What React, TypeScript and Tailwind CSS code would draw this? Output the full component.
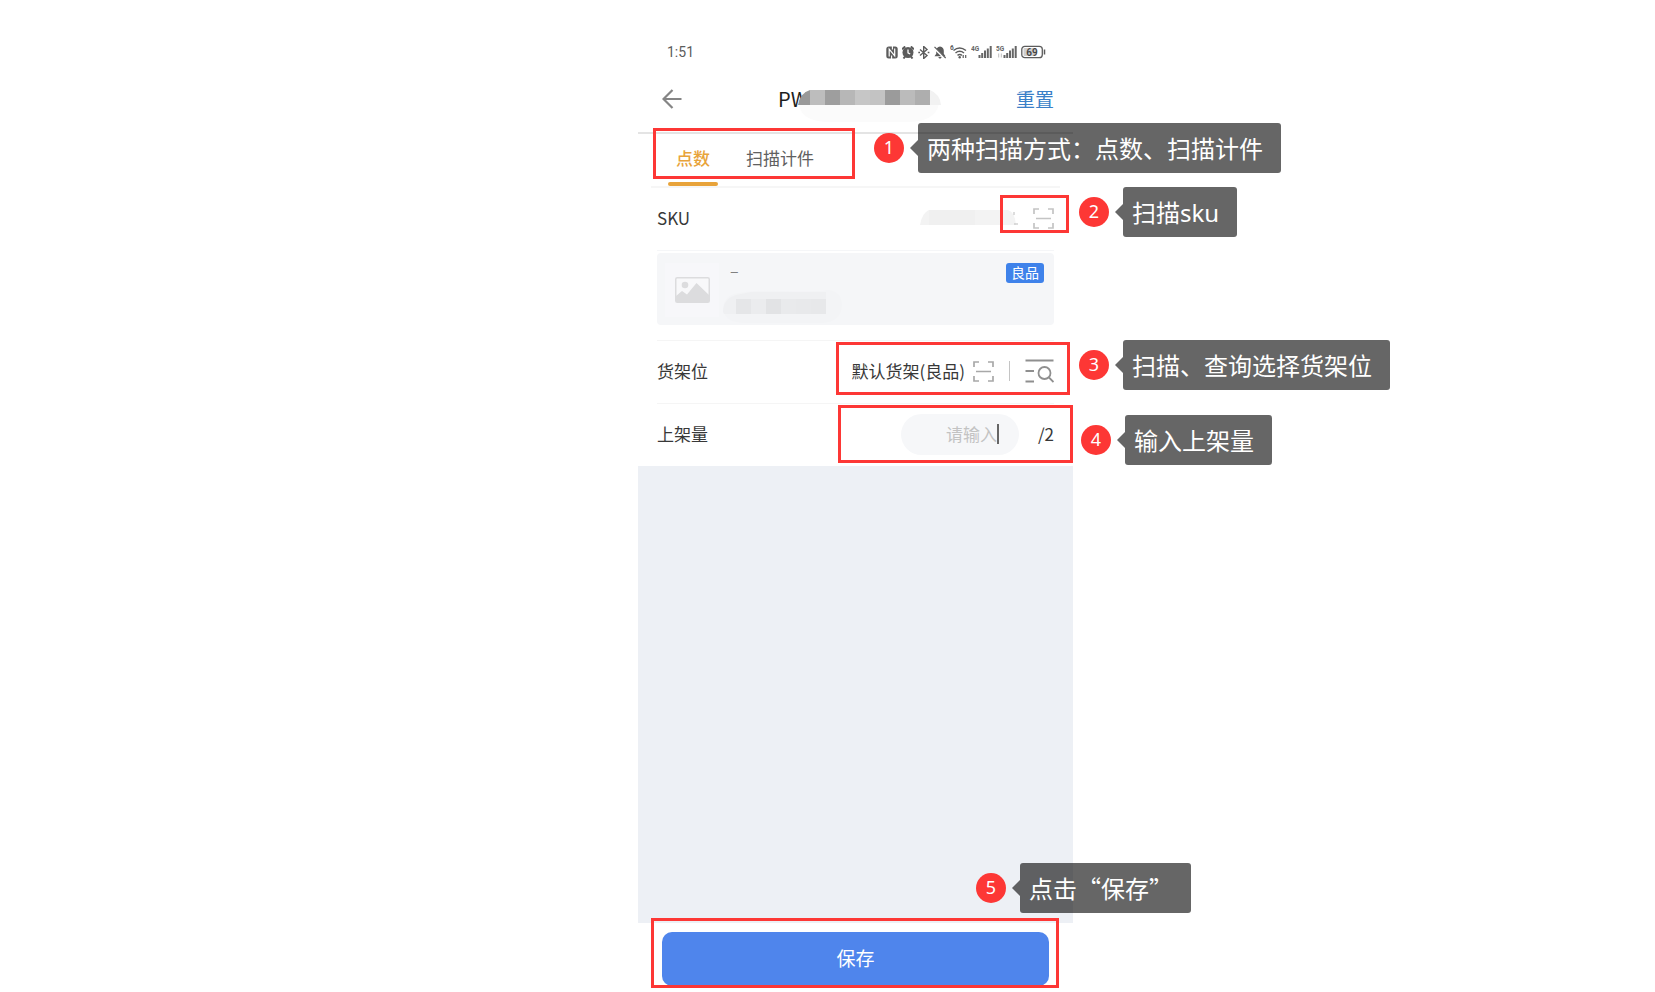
import { useState } from 'react';
import type { ReactNode } from 'react';

const tabs = ['点数', '扫描计件'];

const titleMask = ['#bdbdbd', '#9e9e9e', '#b7b7b7', '#c6c6c6', '#c3c3c3', '#9b9b9b', '#bbbbbb', '#aeaeae'];
const productMask = ['#e5e6e8', '#ebecee', '#e2e3e5', '#e9eaec', '#e8e9eb', '#e7e8ea'];

function Frame({ className }: { className: string }) {
  return <div className={`pointer-events-none absolute z-10 border-3 border-[#fd3735] ${className}`} />;
}

interface CalloutProps {
  step: number;
  className: string;
  children: ReactNode;
}

function Callout({ step, className, children }: CalloutProps) {
  return (
    <div className={`absolute z-20 flex items-center whitespace-nowrap text-white ${className}`}>
      <span className="flex size-[30px] items-center justify-center rounded-full bg-[#fd3735] pb-0.5 font-['Noto_Sans',sans-serif] text-lg leading-6">
        {step}
      </span>
      <span className="ml-1.5 h-4 w-2 bg-black/60 [clip-path:polygon(100%_0,100%_100%,0_50%)]" />
      <span className="h-[50px] rounded-[3px] bg-black/60 pr-[18px] pl-[9px] text-2xl leading-[49px]">{children}</span>
    </div>
  );
}

function ScanIcon({ className }: { className: string }) {
  return (
    <svg viewBox="0 0 21 21" className={`h-[21px] w-[21px] ${className}`} fill="none" stroke="currentColor" strokeWidth="1.7">
      <path d="M1 6V1h5M15 1h5v5M20 15v5h-5M6 20H1v-5M3 10.500h15" />
    </svg>
  );
}

function SignalIcon({ label, weak }: { label: string; weak?: boolean }) {
  return (
    <svg viewBox="0 0 21 14" className="h-3.5 w-[21px]" fill="#666">
      <text x="0" y="5.500" fontSize="6.500" fontWeight="700" fontFamily="Roboto, sans-serif">{label}</text>
      {weak && <path d="M2 8.500h1.200v4H2zM4.800 8.500H6v4H4.800z" opacity=".35" />}
      <rect x="7.500" y="10" width="2" height="3" />
      <rect x="10.200" y="8" width="2" height="5" />
      <rect x="13" y="5.500" width="2" height="7.500" />
      <rect x="15.800" y="3.500" width="2" height="9.500" />
      <rect x="18.700" y="1" width="2" height="12" />
    </svg>
  );
}

function StatusBar() {
  return (
    <div className="flex h-16 items-center justify-between pt-10 pr-[27px] pl-[29px] text-[#5c5c5c]">
      <span className="font-[Roboto,sans-serif] text-sm leading-5">1:51</span>
      <div className="flex items-center gap-1">
        {/* nfc */}
        <svg viewBox="0 0 12 13" className="h-[13px] w-3">
          <rect x=".3" y=".5" width="11.400" height="12" rx="2.500" fill="currentColor" />
          <path d="M3.200 10.500V3.200l5.500 6.600V2.500" fill="none" stroke="#fff" strokeWidth="1.200" />
          <path d="M5.600 9.500v3.500M6.400 0v3.500" stroke="#fff" strokeWidth="1.100" />
        </svg>
        {/* alarm */}
        <svg viewBox="0 0 12 13" className="h-[13px] w-3">
          <path d="M0 3.200L3.200.5M12 3.200L8.800.5M1.500 12.500l1.500-2M10.500 12.500l-1.500-2" stroke="currentColor" strokeWidth="2" />
          <circle cx="6" cy="6.500" r="5.500" fill="currentColor" />
          <path d="M6 3.500v3.300L8.200 8" fill="none" stroke="#fff" strokeWidth="1.300" />
        </svg>
        {/* bluetooth */}
        <svg viewBox="0 0 12 13" className="h-[13px] w-3" fill="none" stroke="currentColor" strokeWidth="1.400">
          <path d="M2 3.500l7 6L5.700 12.500V.5L9 3.500l-7 6" />
          <path d="M.3 6.500h1.700M9.700 6.500h1.700" />
        </svg>
        {/* muted bell */}
        <svg viewBox="0 0 12 13" className="h-[13px] w-3">
          <path d="M6 .5c2.600.4 3.800 2 3.800 4.300v3L11.500 10.300H.5l1.700-2.500v-3C2.200 2.500 3.400.9 6 .5zM4.400 11h3.200c-.4 2-2.800 2-3.200 0z" fill="currentColor" />
          <path d="M0 1.800l11.200 11" stroke="#fff" strokeWidth="2.200" />
          <path d="M.5 .8l11.200 11.200" stroke="currentColor" strokeWidth="1.200" />
        </svg>
        {/* wifi */}
        <svg viewBox="0 0 17 14" className="h-3.5 w-[17px]" fill="none" stroke="currentColor" strokeWidth="1.500">
          <text x="0" y="5" fontSize="6.500" fontWeight="700" fontFamily="Roboto, sans-serif" fill="currentColor" stroke="none">6</text>
          <path d="M3.500 5.500q6-5 12.500 0M5.500 8q4.200-3.300 8.500 0M7.500 10.300q2.300-1.600 4.400 0" />
          <circle cx="9.700" cy="12.300" r="1.200" fill="currentColor" stroke="none" />
          <path d="M13.200 10v3M15.700 10v3" strokeWidth="1.200" />
        </svg>
        <SignalIcon label="4G" />
        <SignalIcon label="5G" weak />
        {/* battery */}
        <svg viewBox="0 0 25 14" className="h-3.5 w-[25px]">
          <rect x=".8" y="1.300" width="20.500" height="11.400" rx="3" fill="#fff" stroke="currentColor" strokeWidth="1.300" />
          <rect x="2.500" y="3" width="13" height="8" rx="1" fill="#cfcfcf" />
          <path d="M23.500 4.500v5" stroke="currentColor" strokeWidth="1.500" />
          <text x="11" y="10.600" fontSize="10" fontWeight="600" textAnchor="middle" fontFamily="Roboto, sans-serif" fill="#444">69</text>
        </svg>
      </div>
    </div>
  );
}

export default function App() {
  const [tab, setTab] = useState(0);
  const [count, setCount] = useState('');

  return (
    <main className="flex min-h-screen justify-center bg-white pl-14 font-['Noto_Sans_CJK_SC',sans-serif]" lang="zh-CN">
      <div className="flex w-full max-w-[435px] flex-col bg-white text-[17px] leading-6 text-[#383838]">
        <StatusBar />

        <header className="flex h-[70px] items-center justify-between border-b-2 border-[#e4e4e4] pt-0.5 pr-[19px] pl-6">
          <button type="button" aria-label="返回" className="w-10 text-[#858585]">
            <svg viewBox="0 0 20 20" className="size-5" fill="none" stroke="currentColor" strokeWidth="2.200">
              <path d="M19.500 10H1.500M10.500 1L1.500 10l9 9" />
            </svg>
          </button>
          <h1 className="relative w-[162px] text-xl leading-7 text-[#1e1e1e]">
            PW
            <svg viewBox="0 0 144 32" className="absolute top-[5px] left-[19px] h-8 w-36">
              <path d="M8 14H142Q138 32 110 32H30Q4 31 2 14z" fill="#fbfbfb" />
              <path d="M13 0V15H1Q3 3 13 0z" fill="#999" />
              {titleMask.map((fill, i) => (
                <rect key={i} x={13 + i * 15} y="0" width="15" height="15" fill={fill} />
              ))}
              <path d="M133 0Q143 4 144 15H133z" fill="#f2f2f2" />
            </svg>
          </h1>
          <button type="button" className="text-[19px] leading-7 text-[#3a7fc8]">重置</button>
        </header>

        <div className="relative h-[54px] px-[13px]">
          <nav className="flex h-full gap-5 border-b-2 border-[#f6f6f6] pl-[17px]">
            {tabs.map((name, i) => (
              <button
                key={name}
                type="button"
                onClick={() => setTab(i)}
                className={`relative px-2 pb-1 ${tab === i ? 'font-medium text-[#e8a33a]' : 'text-[#606060]'}`}
              >
                {name}
                {tab === i && <span className="absolute inset-x-0 bottom-0 h-1 rounded-full bg-[#e8a33a]" />}
              </button>
            ))}
          </nav>
          <Frame className="-top-1.5 left-[15px] h-[51px] w-[202px]" />
          <Callout step={1} className="-top-[11px] left-[236px]">两种扫描方式：点数、扫描计件</Callout>
        </div>

        <div className="relative px-[19px]">
          <div className="flex h-[63px] items-center justify-between border-b border-[#f5f6f8] pb-0.5">
            <span>SKU</span>
            <div className="flex items-center gap-[15px]">
              <svg viewBox="0 0 98 16" className="h-4 w-[98px]">
                <path d="M9 0H88Q95 2 96 15H0Q2 3 9 0z" fill="#f3f3f3" />
                <path d="M9 0h46v15H9z" fill="#f0f0f0" />
                <path d="M94 2v3M94 14h4" stroke="#bbb" strokeWidth="1" />
              </svg>
              <button type="button" aria-label="扫描SKU">
                <ScanIcon className="text-[#c4c4c4]" />
              </button>
            </div>
          </div>
          <Frame className="top-[7px] left-[362px] h-[38px] w-[69px]" />
          <Callout step={2} className="-top-px left-[441px]">
            扫描<span className="font-['Noto_Sans',sans-serif]">sku</span>
          </Callout>
        </div>

        <div className="px-[19px] pt-0.5 pb-[15px]">
          <div className="flex h-[72px] rounded bg-[#f5f6f8] pr-2.5 pl-2">
            <div className="mt-2.5 flex h-[54px] w-[54px] items-center justify-center bg-[#f7f7fa]">
              <svg viewBox="0 0 35 26" className="h-[26px] w-[35px]">
                <rect x=".75" y=".75" width="33.500" height="24.500" rx="1.500" fill="#f8f8fa" stroke="#dcdcde" strokeWidth="1.500" />
                <circle cx="10" cy="8" r="3.300" fill="#dcdcde" />
                <path d="M1 19l6-5 5 3.500L21.500 6 34 18v7H1z" fill="#dcdcde" />
              </svg>
            </div>
            <div className="flex flex-1 flex-col pt-[7px] pl-[3px]">
              <span className="pl-2 text-base leading-5 text-[#808080]">–</span>
              <svg viewBox="0 0 120 34" className="mt-2.5 h-[34px] w-[120px]">
                <path d="M12 4Q28 0 60 1T108 0Q119 2 120 14 120 32 100 33H26Q2 34 1 18 2 7 12 4z" fill="#f3f4f6" />
                <path d="M1 22Q1 9 14 5V24H2z" fill="#eff0f2" />
                <path d="M14 5l15-3h75v22H14z" fill="#eff0f2" />
                {productMask.map((fill, i) => (
                  <rect key={i} x={14 + i * 15} y="9" width="15" height="15" fill={fill} />
                ))}
              </svg>
            </div>
            <span className="mt-2.5 h-5 rounded-[3px] bg-[#3f82ea] px-[5px] text-sm leading-[19px] text-white">良品</span>
          </div>
        </div>

        <div className="relative px-[19px]">
          <div className="flex h-[63px] items-center justify-between border-t border-[#f5f5f5] pb-0.5">
            <span>货架位</span>
            <div className="flex items-center">
              <span>默认货架(良品)</span>
              <button type="button" aria-label="扫描货架位" className="ml-2">
                <ScanIcon className="text-[#a8a8a8]" />
              </button>
              <span className="ml-[15px] h-5 w-px bg-[#c4c4c4]" />
              <button type="button" aria-label="查询货架位" className="ml-[15px]">
                <svg viewBox="0 0 29 24" className="h-6 w-[29px]" fill="none" stroke="#8f8f8f" strokeWidth="1.800">
                  <path d="M.5 1.500H28.500M.5 12h8.500M.5 22.500h8.500M24 18.500l4.500 4.500" />
                  <circle cx="19.500" cy="14" r="6" />
                </svg>
              </button>
            </div>
          </div>
          <Frame className="top-0.5 left-[198px] h-[53px] w-[234px]" />
          <Callout step={3} className="top-0 left-[441px]">扫描、查询选择货架位</Callout>
        </div>

        <div className="relative px-[19px]">
          <div className="flex h-[63px] items-center justify-between border-t border-[#f5f5f5] pb-0.5">
            <label htmlFor="count">上架量</label>
            <div className="flex items-center gap-[19px]">
              <div className="flex h-[41px] w-[118px] items-center rounded-full bg-[#f6f7f9] pr-5 pl-4">
                <input
                  id="count"
                  value={count}
                  onChange={(e) => setCount(e.target.value)}
                  placeholder="请输入"
                  className="min-w-0 flex-1 text-right outline-none placeholder:text-[#c3c3c3]"
                />
                <span className="h-5 w-0.5 bg-[#666]" />
              </div>
              <span>/2</span>
            </div>
          </div>
          <Frame className="top-0.5 left-[200px] h-[58px] w-[235px]" />
          <Callout step={4} className="top-3 left-[443px]">输入上架量</Callout>
        </div>

        <div className="flex-1 bg-[#edf0f5]" />

        <footer className="relative h-[69px] px-6 pt-[9px]">
          <button type="button" className="h-[54px] w-full rounded-[10px] bg-[#4f85ec] pb-0.5 text-[19px] leading-7 text-white">
            保存
          </button>
          <Frame className="-top-[5px] left-[13px] h-[70px] w-[408px]" />
          <Callout step={5} className="-top-[60px] left-[338px]">点击“保存”</Callout>
        </footer>
      </div>
    </main>
  );
}
